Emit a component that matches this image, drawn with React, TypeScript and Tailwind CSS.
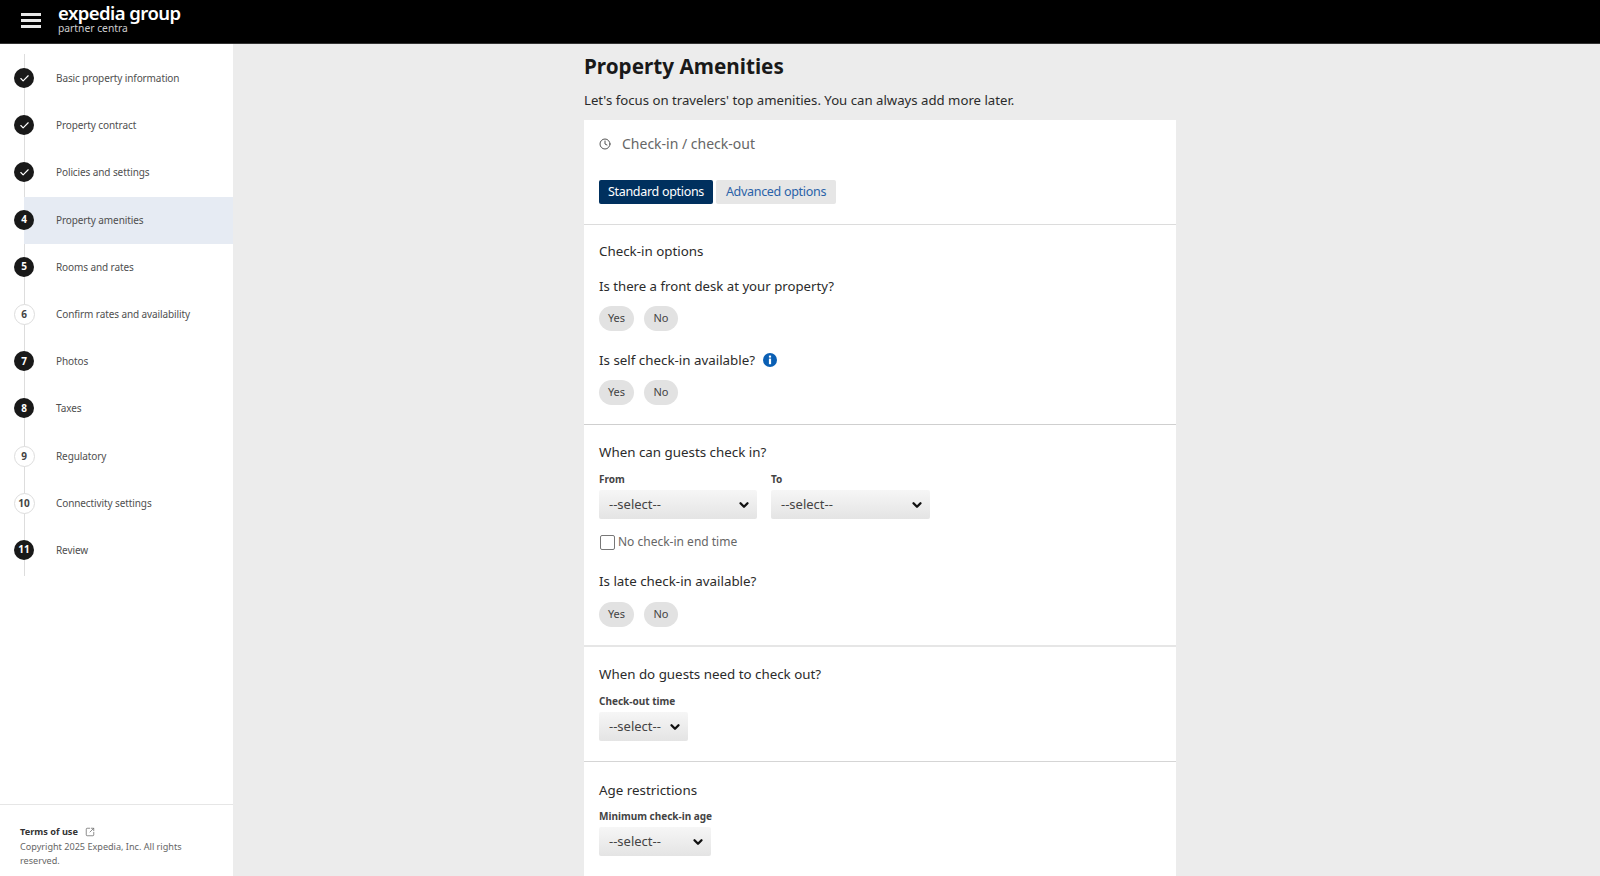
import { Check, ChevronDown, Clock, SquareArrowOutUpRight } from "lucide-react";

const font = { fontFamily: '"Noto Sans", sans-serif' };

type Step = { n: string; label: string; kind: "done" | "dark" | "open"; active?: boolean };
const steps: Step[] = [
  { n: "1", label: "Basic property information", kind: "done" },
  { n: "2", label: "Property contract", kind: "done" },
  { n: "3", label: "Policies and settings", kind: "done" },
  { n: "4", label: "Property amenities", kind: "dark", active: true },
  { n: "5", label: "Rooms and rates", kind: "dark" },
  { n: "6", label: "Confirm rates and availability", kind: "open" },
  { n: "7", label: "Photos", kind: "dark" },
  { n: "8", label: "Taxes", kind: "dark" },
  { n: "9", label: "Regulatory", kind: "open" },
  { n: "10", label: "Connectivity settings", kind: "open" },
  { n: "11", label: "Review", kind: "dark" },
];

function StepRow({ s }: { s: Step }) {
  return (
    <div className={`relative flex h-[47.2px] items-center ml-[24px] pl-[32px] ${s.active ? "bg-[#e6ebf3]" : ""}`}>
      <div
        className={`absolute top-[13px] flex items-center justify-center rounded-full text-[10px] font-bold ${
          s.kind === "open"
            ? "left-[-10.5px] h-[21px] w-[21px] border border-[#dddddd] bg-white text-[#444444]"
            : "left-[-10px] h-[20px] w-[20px] bg-[#191919] text-white"
        }`}
      >
        {s.kind === "done" ? <Check size={11} strokeWidth={2.5} /> : s.n}
      </div>
      <span className="text-[10px] tracking-[-0.1px] text-[#4f4f4f]">{s.label}</span>
    </div>
  );
}

function Pills({ top = "mt-[11px]" }: { top?: string }) {
  return (
    <div className={`${top} flex gap-[10px]`}>
      <button className="h-[25px] w-[35px] rounded-full bg-[#e2e2e2] text-[11px] text-[#444444]">Yes</button>
      <button className="h-[25px] w-[34px] rounded-full bg-[#e2e2e2] text-[11px] text-[#444444]">No</button>
    </div>
  );
}

function Sel({ w, label }: { w: string; label: string }) {
  return (
    <div>
      <div className="text-[10px] font-bold leading-[14px] text-[#444444]">{label}</div>
      <div className={`relative mt-[4px] h-[29px] ${w}`}>
        <select className="h-full w-full appearance-none rounded-[2px] bg-gradient-to-b from-[#f6f6f6] to-[#e4e4e4] pl-[10px] text-[13px] text-[#444444]">
          <option>--select--</option>
        </select>
        <ChevronDown size={14} strokeWidth={4} className="pointer-events-none absolute right-[6px] top-[7.5px] text-[#111111]" />
      </div>
    </div>
  );
}

const q = "text-[13.35px] leading-[18px] text-[#2b2b2b]";

export default function App() {
  return (
    <div style={font} className="flex h-[876px] flex-col overflow-hidden bg-[#ececec]">
      <header className="flex h-[44px] shrink-0 items-start border-b border-[#333333] bg-black">
        <div className="ml-[21px] mt-[13px] flex w-[20px] flex-col gap-[3.5px]">
          <span className="h-[2.5px] bg-[#e8e8e8]" />
          <span className="h-[2.5px] bg-[#e8e8e8]" />
          <span className="h-[2.5px] bg-[#e8e8e8]" />
        </div>
        <div className="ml-[17px] mt-[3px] text-white">
          <div className="text-[18.5px] font-semibold leading-[19px] tracking-[-0.55px]">expedia group</div>
          <div className="text-[10.3px] leading-[12px] text-[#cccccc]">partner centra</div>
        </div>
      </header>
      <div className="flex min-h-0 flex-1">
        <aside className="flex w-[233px] shrink-0 flex-col bg-white">
          <nav className="relative mt-[11px] flex-1">
            <div className="absolute bottom-[228px] left-[24px] top-[-1px] w-px bg-[#dddddd]" />
            {steps.map((s) => (
              <StepRow key={s.n} s={s} />
            ))}
          </nav>
          <footer className="h-[72px] border-t border-[#e6e6e6] pl-[20px] pr-[40px] pt-[20px]">
            <div className="flex items-center gap-[7px] text-[9.2px] font-bold leading-[13px] text-[#333333]">
              Terms of use <SquareArrowOutUpRight size={10} className="text-[#777777]" />
            </div>
            <div className="mt-[2px] text-[9.1px] leading-[14px] text-[#666666]">Copyright 2025 Expedia, Inc. All rights reserved.</div>
          </footer>
        </aside>
        <main className="ml-[351px] w-[592px]">
          <h1 className="mt-[7px] text-[20.7px] font-bold leading-[30px] text-[#191919]">Property Amenities</h1>
          <p className="mt-[10px] text-[13.2px] leading-[18px] text-[#2b2b2b]">Let's focus on travelers' top amenities. You can always add more later.</p>
          <section className="mt-[11px] bg-white">
            <div className="h-[105px] border-b border-[#dcdcdc] px-[15px] pt-[15px]">
              <div className="flex items-center gap-[11px] text-[14px] leading-[18px] text-[#666666]">
                <Clock size={12} className="text-[#555555]" /> Check-in / check-out
              </div>
              <div className="mt-[27px] flex gap-[3px]">
                <button className="h-[24px] w-[114px] rounded-[2px] bg-[#00305e] text-[12.5px] tracking-[-0.3px] text-white">Standard options</button>
                <button className="h-[24px] w-[120px] rounded-[2px] bg-[#e6e6e6] text-[12.5px] tracking-[-0.3px] text-[#2a62a8]">Advanced options</button>
              </div>
            </div>
            <div className="h-[200px] border-b border-[#cfcfcf] px-[15px] pt-[17px]">
              <div className={q}>Check-in options</div>
              <div className="mt-[17px] text-[13.2px] leading-[18px] text-[#2b2b2b]">Is there a front desk at your property?</div>
              <Pills />
              <div className={`mt-[20px] flex items-center gap-[8px] ${q}`}>
                Is self check-in available?
                <svg width="14" height="14" viewBox="0 0 14 14">
                  <circle cx="7" cy="7" r="7" fill="#0a5fb4" />
                  <rect x="5.9" y="2.6" width="2.2" height="2" fill="#fff" />
                  <rect x="5.9" y="5.6" width="2.2" height="5.6" fill="#fff" />
                </svg>
              </div>
              <Pills />
            </div>
            <div className="h-[222px] border-b-2 border-[#e6e6e6] px-[15px] pt-[18px]">
              <div className={q}>When can guests check in?</div>
              <div className="mt-[11px] flex gap-[14px]">
                <Sel w="w-[158px]" label="From" />
                <Sel w="w-[159px]" label="To" />
              </div>
              <div className="mt-[14px] flex items-center gap-[3px] text-[12px] leading-[18px] text-[#666666]">
                <span className="ml-[1px] h-[15px] w-[15px] rounded-[2px] border border-[#777777]" />
                No check-in end time
              </div>
              <div className={`mt-[21px] ${q}`}>Is late check-in available?</div>
              <Pills top="mt-[12px]" />
            </div>
            <div className="h-[115px] border-b border-[#d5d5d5] px-[15px] pt-[18px]">
              <div className={q}>When do guests need to check out?</div>
              <div className="mt-[11px]">
                <Sel w="w-[89px]" label="Check-out time" />
              </div>
            </div>
            <div className="px-[15px] pb-[40px] pt-[19px]">
              <div className={q}>Age restrictions</div>
              <div className="mt-[10px]">
                <Sel w="w-[112px]" label="Minimum check-in age" />
              </div>
            </div>
          </section>
        </main>
      </div>
    </div>
  );
}
